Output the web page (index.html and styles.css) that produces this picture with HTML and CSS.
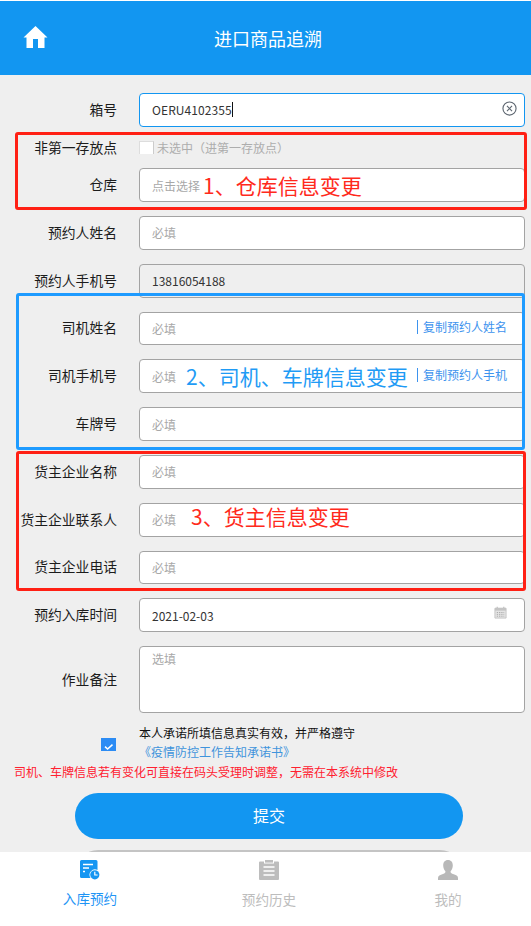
FILE: index.html
```html
<!DOCTYPE html>
<html lang="zh-CN">
<head>
<meta charset="utf-8">
<title>进口商品追溯</title>
<link rel="stylesheet" href="styles.css">
</head>
<body>
<div class="app">
  <header class="topbar">
    <svg class="home-icon" viewBox="0 0 24 22"><path d="M12 0 L24 11.5 H21 V22 H14.5 V13 H9.5 V22 H3 V11.5 H0 Z" fill="#fff"/></svg>
    <h1 class="title">进口商品追溯</h1>
  </header>
  <main class="content">
    <form class="form">
      <div class="row"><span class="label">箱号</span><div class="field field-active"><span class="value">OERU4102355</span><span class="caret"></span>
        <svg class="clear-icon" viewBox="0 0 16 16"><circle cx="8" cy="8" r="7" fill="none" stroke="#5d6670" stroke-width="1.2"/><path d="M5.3 5.3 L10.7 10.7 M10.7 5.3 L5.3 10.7" stroke="#5d6670" stroke-width="1.2"/></svg></div></div>
      <div class="row row-check"><span class="label">非第一存放点</span><span class="check-off"></span><span class="check-text">未选中（进第一存放点）</span></div>
      <div class="row"><span class="label">仓库</span><div class="field"><span class="hint">点击选择</span><span class="note note-red note-1">1、仓库信息变更</span></div></div>
      <div class="row"><span class="label">预约人姓名</span><div class="field"><span class="hint">必填</span></div></div>
      <div class="row"><span class="label">预约人手机号</span><div class="field field-off"><span class="value">13816054188</span></div></div>
      <div class="row"><span class="label">司机姓名</span><div class="field"><span class="hint">必填</span><a class="copy">复制预约人姓名</a></div></div>
      <div class="row"><span class="label">司机手机号</span><div class="field"><span class="hint">必填</span><span class="note note-blue note-2">2、司机、车牌信息变更</span><a class="copy">复制预约人手机</a></div></div>
      <div class="row"><span class="label">车牌号</span><div class="field"><span class="hint">必填</span></div></div>
      <div class="row"><span class="label">货主企业名称</span><div class="field"><span class="hint">必填</span></div></div>
      <div class="row"><span class="label">货主企业联系人</span><div class="field"><span class="hint">必填</span><span class="note note-red note-3">3、货主信息变更</span></div></div>
      <div class="row"><span class="label">货主企业电话</span><div class="field"><span class="hint">必填</span></div></div>
      <div class="row"><span class="label">预约入库时间</span><div class="field"><span class="value">2021-02-03</span>
        <svg class="date-icon" viewBox="0 0 14 14"><path d="M1 2.5 H13 V13 H1 Z" fill="#e4e4e4" stroke="#c4c4c4"/><path d="M1 2 H13 V5 H1 Z" fill="#c4c4c4"/><path d="M3.5 .8 V3 M10.5 .8 V3" stroke="#c4c4c4" stroke-width="1.4"/><path d="M3 7 H11 M3 9 H11 M3 11 H11" stroke="#a9a9a9" stroke-dasharray="1.4 1"/></svg></div></div>
      <div class="row row-area"><span class="label">作业备注</span><div class="field field-area"><span class="hint">选填</span></div></div>
    </form>
    <div class="agree">
      <span class="agree-box"><svg class="agree-mark" viewBox="0 0 15 13"><rect width="15" height="13" fill="#2c8cf4"/><path d="M4 8.6 L6.6 11 L11.5 6.6" fill="none" stroke="#fff" stroke-width="1.5"/></svg></span>
      <div class="agree-text">
        <p class="agree-line">本人承诺所填信息真实有效，并严格遵守</p>
        <p class="agree-link">《疫情防控工作告知承诺书》</p>
      </div>
    </div>
    <p class="notice">司机、车牌信息若有变化可直接在码头受理时调整，无需在本系统中修改</p>
    <button class="btn btn-primary" type="button">提交</button>
    <button class="btn btn-muted" type="button"></button>
    <div class="mark mark-red mark-1"></div>
    <div class="mark mark-blue mark-2"></div>
    <div class="mark mark-red mark-3"></div>
  </main>
  <nav class="tabbar">
    <a class="tab tab-on">
      <svg class="tab-icon" viewBox="0 0 20 20"><path d="M1.5 0 H16 A1.5 1.5 0 0 1 17.5 1.5 V10 A5.5 5.5 0 0 0 10.5 18 H1.5 A1.5 1.5 0 0 1 0 16.5 V1.5 A1.5 1.5 0 0 1 1.5 0 Z" fill="#1596f2"/><path d="M3 4.5 H13 M3 8 H9 M3 11.5 H5" stroke="#fff" stroke-width="1.3"/><circle cx="14.8" cy="14.8" r="4.6" fill="#1596f2"/><path d="M14.8 11.8 V15 H17.6" fill="none" stroke="#fff" stroke-width="1.2"/></svg>
      <span>入库预约</span>
    </a>
    <a class="tab">
      <svg class="tab-icon" viewBox="0 0 20 20"><path d="M1 1.5 H5 V3.5 H15 V1.5 H19 Q20 1.5 20 2.5 V19 Q20 20 19 20 H1 Q0 20 0 19 V2.5 Q0 1.5 1 1.5 Z" fill="#bdbdbd"/><rect x="6" y="0" width="8" height="2.6" fill="#bdbdbd"/><path d="M4.5 7 H15.5 M4.5 11 H15.5 M4.5 15 H15.5" stroke="#fff" stroke-width="1.4"/></svg>
      <span>预约历史</span>
    </a>
    <a class="tab">
      <svg class="tab-icon" viewBox="0 0 20 20"><path d="M10 0 C13.2 0 14.8 2.4 14.8 5.4 C14.8 8 13.6 10 12.6 11.2 C12.4 12.6 13 13.2 15 14 C18 15 20 15.8 20 18 V20 H0 V18 C0 15.8 2 15 5 14 C7 13.2 7.6 12.6 7.4 11.2 C6.4 10 5.2 8 5.2 5.4 C5.2 2.4 6.8 0 10 0 Z" fill="#b8b8b8"/></svg>
      <span>我的</span>
    </a>
  </nav>
</div>
</body>
</html>
```

FILE: styles.css
```css
* { box-sizing: border-box; }
html, body { margin: 0; padding: 0; }
body {
  background: #fff;
  font-family: "Noto Sans CJK SC", "Noto Sans", sans-serif;
  color: #222;
}
.app {
  width: 531px;
  height: 926px;
  display: flex;
  flex-direction: column;
  overflow: hidden;
}
.topbar {
  flex: none;
  height: 74px;
  margin-top: 1px;
  background: #1296f1;
  display: flex;
  align-items: center;
  justify-content: center;
  position: relative;
}
.home-icon {
  position: absolute;
  left: 23px;
  top: 25px;
  width: 25px;
  height: 22px;
}
.title {
  margin: 0 0 0 5px;
  font-size: 18px;
  font-weight: 400;
  color: #fff;
  line-height: 26px;
}
.content {
  flex: 1;
  min-height: 0;
  background: #efefef;
  overflow: hidden;
  position: relative;
  padding-top: 18px;
}
.form {
  display: flex;
  flex-direction: column;
  gap: 14px;
  padding-right: 6px;
}
.row {
  display: flex;
  align-items: center;
  gap: 22px;
  font-size: 13.8px;
}
.label {
  flex: none;
  width: 117px;
  text-align: right;
  line-height: 20px;
  white-space: nowrap;
  margin-top: -2px;
  color: #1c1c1c;
}
.row-check { height: 13.4px; gap: 0; }
.row-check .label { margin-right: 22px; margin-top: -1px; }
.check-off {
  flex: none;
  width: 15px;
  height: 13px;
  background: #fff;
  border: 1px solid #ddd;
  border-bottom: 0;
  border-right-color: #ccc;
}
.check-text {
  margin-left: 3px;
  font-size: 12px;
  color: #adadad;
  white-space: nowrap;
}
.field {
  flex: 1;
  min-width: 0;
  height: 33.8px;
  background: #fff;
  border: 1px solid #a3a3a3;
  border-radius: 4px;
  display: flex;
  align-items: center;
  padding: 0 12px;
  font-size: 12px;
  position: relative;
}
.field-active { border-color: #1296f1; }
.field-off { background: #efefef; }
.field-area {
  height: 67px;
  align-items: flex-start;
  padding-top: 3px;
}
.value { color: #333; font-size: 12px; }
.field-active .value { letter-spacing: .08px; }
.caret {
  width: 1px;
  height: 15px;
  background: #111;
}
.hint { color: #a8a8a8; font-size: 12px; white-space: nowrap; }
.note {
  font-size: 21px;
  line-height: 26px;
  margin-top: -1px;
  white-space: nowrap;
}
.note-red { color: #ff2a1c; }
.note-blue { color: #1f9bf5; }
.note-1 { margin-left: 3px; }
.note-2 { margin-left: 10px; }
.note-3 { margin-left: 15px; margin-top: -7px; }
.copy {
  position: absolute;
  right: 17px;
  top: 50%;
  transform: translateY(-50%);
  margin-top: -1px;
  font-size: 12px;
  line-height: 14px;
  color: #3d93ee;
  padding-left: 5px;
  border-left: 1px solid #3d93ee;
  white-space: nowrap;
}
.clear-icon {
  position: absolute;
  right: 7px;
  top: 7px;
  width: 15px;
  height: 15px;
}
.date-icon {
  position: absolute;
  right: 17px;
  top: 7px;
  width: 13px;
  height: 13px;
}
.agree {
  display: flex;
  margin-top: 10px;
  gap: 23px;
}
.agree-box {
  flex: none;
  width: 116px;
  display: flex;
  justify-content: flex-end;
  align-items: center;
  padding-top: 4px;
}
.agree-mark { width: 15px; height: 13px; display: block; }
.agree-text { font-size: 12px; line-height: 19px; }
.agree-line { margin: 0; color: #111; }
.agree-link { margin: 0; color: #3f94dc; }
.notice {
  margin: 1px 0 0 14px;
  font-size: 12px;
  line-height: 20px;
  color: #ff2030;
  white-space: nowrap;
}
.btn {
  display: block;
  width: 388px;
  height: 46px;
  margin-left: 75px;
  border: 0;
  border-radius: 23px;
  font: inherit;
}
.btn-primary {
  margin-top: 11px;
  padding-bottom: 3px;
  background: #1296f1;
  color: #fff;
  font-size: 16px;
}
.btn-muted {
  margin-top: 11px;
  background: #c4c4c4;
}
.mark {
  position: absolute;
  border-style: solid;
  border-width: 3px;
  border-radius: 3px;
  pointer-events: none;
}
.mark-red { border-color: #ff2014; }
.mark-blue { border-color: #1e9bff; }
.mark-1 { left: 15px; top: 57px; width: 512px; height: 78px; }
.mark-2 { left: 16px; top: 218px; width: 509px; height: 157px; }
.mark-3 { left: 16px; top: 376px; width: 510px; height: 140px; }
.tabbar {
  flex: none;
  height: 74px;
  background: #fff;
  display: grid;
  grid-template-columns: repeat(3, 179px);
  padding-left: .5px;
  overflow: hidden;
}
.tab {
  display: flex;
  flex-direction: column;
  align-items: center;
  padding-top: 8px;
  font-size: 13.6px;
  color: #bdbdbd;
}
.tab-on { color: #1f95f5; }
.tab-icon { width: 20px; height: 20px; display: block; margin-bottom: 9px; }
.tab-on .tab-icon { margin-bottom: 8px; }
.tab span { line-height: 20px; }
```
